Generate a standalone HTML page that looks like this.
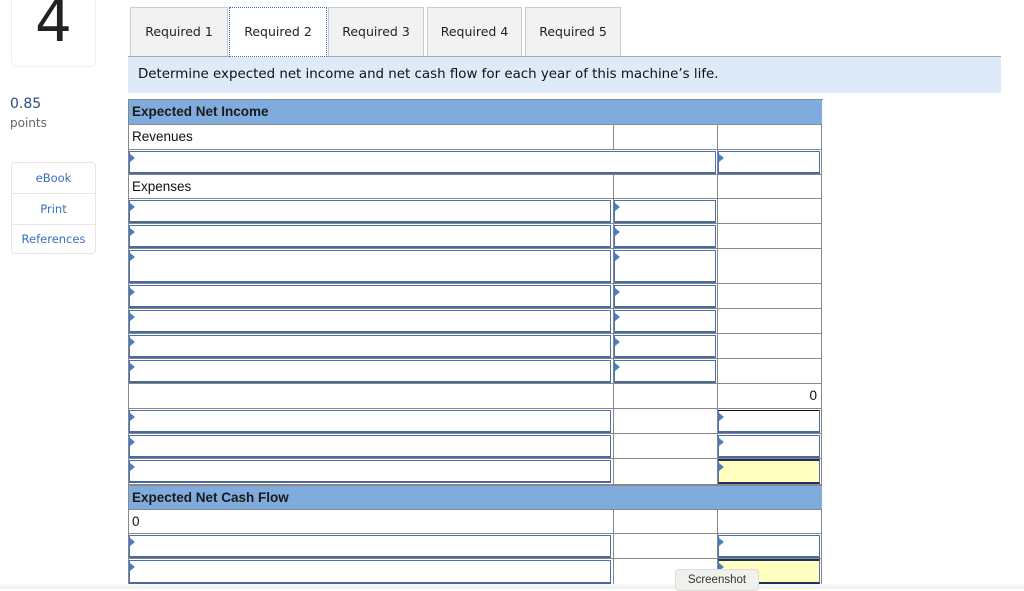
<!DOCTYPE html>
<html><head><meta charset="utf-8"><style>
body{margin:0;width:1024px;height:589px;background:#fff;position:relative;overflow:hidden;font-family:"Liberation Sans",sans-serif;}
.a{position:absolute;box-sizing:border-box;}
.tab{position:absolute;top:7px;height:50px;background:#f2f2f2;border:1px solid #ccc;border-bottom:none;font-family:"DejaVu Sans",sans-serif;font-size:12.5px;color:#222;line-height:48px;text-align:center;box-sizing:border-box;}
.c{position:absolute;box-sizing:border-box;border-right:1px solid #888;border-bottom:1px solid #888;background:#fff;font-size:13.5px;color:#111;}
.i{position:absolute;box-sizing:border-box;border:1px solid #4a72b0;border-bottom:2px solid #4a6a9a;}
.i:before{content:"";position:absolute;left:0;top:2px;border-left:5px solid #4a7fc4;border-top:4px solid transparent;border-bottom:4px solid transparent;}
.y{background:#ffffc0;border-bottom:2px solid #20305a;}
.h{position:absolute;left:129px;width:693px;background:#80acdd;font-weight:bold;font-size:13.5px;color:#1a1a1a;padding-left:3px;box-sizing:border-box;border-bottom:1px solid #888;}
</style></head><body>
<div class="a" style="left:11px;top:-10px;width:85px;height:77px;border:1px solid #eee;border-radius:6px;font-family:'DejaVu Sans',sans-serif;font-size:58px;text-align:center;line-height:60px;color:#222">4</div>
<div class="a" style="left:10px;top:96px;font-family:'DejaVu Sans',sans-serif;font-size:14px;color:#2b4a86">0.85</div>
<div class="a" style="left:10px;top:116px;font-family:'DejaVu Sans',sans-serif;font-size:12px;color:#666">points</div>
<div class="a" style="left:11px;top:162px;width:85px;height:92px;border:1px solid #e6e6e6;border-radius:4px;font-family:'DejaVu Sans',sans-serif;font-size:11.5px;color:#3a6cbf;text-align:center">
<div style="height:30px;line-height:30px;border-bottom:1px solid #e6e6e6">eBook</div>
<div style="height:30px;line-height:30px;border-bottom:1px solid #e6e6e6">Print</div>
<div style="height:29px;line-height:29px">References</div></div>

<div class="tab" style="left:130px;width:98px">Required 1</div>
<div class="tab" style="left:229px;width:98px;background:#fff;border:1px dotted #3a6cbf;height:50px;z-index:2">Required 2</div>
<div class="tab" style="left:328px;width:96px">Required 3</div>
<div class="tab" style="left:427px;width:95px">Required 4</div>
<div class="tab" style="left:525px;width:96px">Required 5</div>
<div class="a" style="left:128px;top:56px;width:873px;height:1px;background:#aaa"></div>
<div class="a" style="left:128px;top:57px;width:873px;height:36px;background:#deeaf7;font-family:'DejaVu Sans',sans-serif;font-size:13.4px;color:#111;padding:10px 0 0 10px">Determine expected net income and net cash flow for each year of this machine’s life.</div>

<div class="a" style="left:128px;top:99px;width:695px;height:486px;border:1px solid #888;border-right:none;background:#fff"></div>
<div class="a" style="left:128px;top:99px;width:695px;height:1px;background:#888"></div>
<div class="h" style="top:100px;height:25px;line-height:24px">Expected Net Income</div>
<div class="h" style="top:485px;height:25px;line-height:24px;border-top:1px solid #888">Expected Net Cash Flow</div>

<div class="c" style="left:129px;top:125px;width:485px;height:25px;padding:4px 3px">Revenues</div>
<div class="c" style="left:614px;top:125px;width:104px;height:25px"></div>
<div class="c" style="left:718px;top:125px;width:104px;height:25px"></div>
<div class="c" style="left:129px;top:150px;width:589px;height:25px"></div>
<div class="i" style="left:129px;top:151px;width:587px;height:23px"></div>
<div class="c" style="left:718px;top:150px;width:104px;height:25px"></div>
<div class="i" style="left:718px;top:151px;width:102px;height:23px"></div>
<div class="c" style="left:129px;top:175px;width:485px;height:24px;padding:4px 3px">Expenses</div>
<div class="c" style="left:614px;top:175px;width:104px;height:24px"></div>
<div class="c" style="left:718px;top:175px;width:104px;height:24px"></div>

<div class="c" style="left:129px;top:199px;width:485px;height:25px"></div><div class="i" style="left:129px;top:200px;width:482px;height:23px"></div><div class="c" style="left:614px;top:199px;width:104px;height:25px"></div><div class="i" style="left:614px;top:200px;width:102px;height:23px"></div><div class="c" style="left:718px;top:199px;width:104px;height:25px"></div>
<div class="c" style="left:129px;top:224px;width:485px;height:25px"></div><div class="i" style="left:129px;top:225px;width:482px;height:23px"></div><div class="c" style="left:614px;top:224px;width:104px;height:25px"></div><div class="i" style="left:614px;top:225px;width:102px;height:23px"></div><div class="c" style="left:718px;top:224px;width:104px;height:25px"></div>
<div class="c" style="left:129px;top:249px;width:485px;height:35px"></div><div class="i" style="left:129px;top:250px;width:482px;height:33px"></div><div class="c" style="left:614px;top:249px;width:104px;height:35px"></div><div class="i" style="left:614px;top:250px;width:102px;height:33px"></div><div class="c" style="left:718px;top:249px;width:104px;height:35px"></div>
<div class="c" style="left:129px;top:284px;width:485px;height:25px"></div><div class="i" style="left:129px;top:285px;width:482px;height:23px"></div><div class="c" style="left:614px;top:284px;width:104px;height:25px"></div><div class="i" style="left:614px;top:285px;width:102px;height:23px"></div><div class="c" style="left:718px;top:284px;width:104px;height:25px"></div>
<div class="c" style="left:129px;top:309px;width:485px;height:25px"></div><div class="i" style="left:129px;top:310px;width:482px;height:23px"></div><div class="c" style="left:614px;top:309px;width:104px;height:25px"></div><div class="i" style="left:614px;top:310px;width:102px;height:23px"></div><div class="c" style="left:718px;top:309px;width:104px;height:25px"></div>
<div class="c" style="left:129px;top:334px;width:485px;height:25px"></div><div class="i" style="left:129px;top:335px;width:482px;height:23px"></div><div class="c" style="left:614px;top:334px;width:104px;height:25px"></div><div class="i" style="left:614px;top:335px;width:102px;height:23px"></div><div class="c" style="left:718px;top:334px;width:104px;height:25px"></div>
<div class="c" style="left:129px;top:359px;width:485px;height:25px"></div><div class="i" style="left:129px;top:360px;width:482px;height:23px"></div><div class="c" style="left:614px;top:359px;width:104px;height:25px"></div><div class="i" style="left:614px;top:360px;width:102px;height:23px"></div><div class="c" style="left:718px;top:359px;width:104px;height:25px"></div>

<div class="c" style="left:129px;top:384px;width:485px;height:25px"></div><div class="c" style="left:614px;top:384px;width:104px;height:25px"></div><div class="c" style="left:718px;top:384px;width:104px;height:25px;text-align:right;padding:4px 4px">0</div>

<div class="c" style="left:129px;top:409px;width:485px;height:25px"></div><div class="i" style="left:129px;top:410px;width:482px;height:23px"></div><div class="c" style="left:614px;top:409px;width:104px;height:25px"></div><div class="c" style="left:718px;top:409px;width:104px;height:25px"></div><div class="i" style="left:718px;top:410px;width:102px;height:23px;border-top-color:#111"></div>
<div class="c" style="left:129px;top:434px;width:485px;height:25px"></div><div class="i" style="left:129px;top:435px;width:482px;height:23px"></div><div class="c" style="left:614px;top:434px;width:104px;height:25px"></div><div class="c" style="left:718px;top:434px;width:104px;height:25px"></div><div class="i" style="left:718px;top:435px;width:102px;height:23px"></div>
<div class="c" style="left:129px;top:459px;width:485px;height:26px"></div><div class="i" style="left:129px;top:460px;width:482px;height:23px"></div><div class="c" style="left:614px;top:459px;width:104px;height:26px"></div><div class="c" style="left:718px;top:459px;width:104px;height:26px"></div><div class="i y" style="left:718px;top:459px;width:102px;height:25px;border-top:2px solid #20305a"></div>

<div class="c" style="left:129px;top:510px;width:485px;height:24px;padding:4px 3px">0</div><div class="c" style="left:614px;top:510px;width:104px;height:24px"></div><div class="c" style="left:718px;top:510px;width:104px;height:24px"></div>
<div class="c" style="left:129px;top:534px;width:485px;height:25px"></div><div class="i" style="left:129px;top:535px;width:482px;height:23px"></div><div class="c" style="left:614px;top:534px;width:104px;height:25px"></div><div class="c" style="left:718px;top:534px;width:104px;height:25px"></div><div class="i" style="left:718px;top:535px;width:102px;height:23px"></div>
<div class="c" style="left:129px;top:559px;width:485px;height:26px"></div><div class="i" style="left:129px;top:560px;width:482px;height:24px"></div><div class="c" style="left:614px;top:559px;width:104px;height:26px"></div><div class="c" style="left:718px;top:559px;width:104px;height:26px"></div><div class="i y" style="left:718px;top:559px;width:102px;height:25px;border-top:2px solid #20305a"></div>

<div class="a" style="left:0;top:584px;width:1024px;height:5px;background:linear-gradient(#fafafa,#f0f0f0)"></div>
<div class="a" style="left:675px;top:569px;width:84px;height:22px;background:#f0f0ec;border:1px solid #ddd;border-radius:4px;font-size:11.5px;color:#333;text-align:center;line-height:20px">Screenshot</div>
</body></html>
